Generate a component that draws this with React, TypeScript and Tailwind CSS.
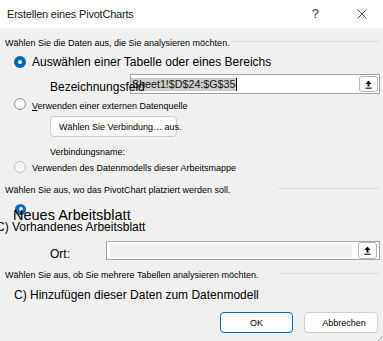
import React from "react";

const font = { fontFamily: '"Liberation Sans", Arial, sans-serif' };

export default function App() {
  return (
    <div
      className="w-[383px] h-[341px] bg-[#f0f0f0] overflow-hidden text-black relative"
      style={font}
    >
      {/* TITLE BAR */}
      <div className="h-[28px] bg-white flex items-center">
        <span className="ml-[7px] text-[11px] leading-[13px] tracking-[-0.2px] text-[#1a1a1a]">
          Erstellen eines PivotCharts
        </span>
        <span className="ml-auto mr-[38px] text-[13px] leading-[14px] text-[#333]">?</span>
        <CloseIcon />
      </div>

      {/* SECTION 1 */}
      <div className="flex items-start mt-[10px]">
        <span className="w-[231px] pl-[5px] text-[9px] leading-[11px] whitespace-nowrap">
          Wählen Sie die Daten aus, die Sie analysieren möchten.
        </span>
        <div className="mt-[3px] h-px w-[148px] bg-[#dcdcdc]" />
      </div>

      <div className="flex items-center h-[16px] mt-[5px]">
        <Radio checked className="ml-[14px]" />
        <span className="ml-[6px] text-[12px] leading-[16px] whitespace-nowrap">
          Auswählen einer Tabelle oder eines Bereichs
        </span>
      </div>

      <div className="flex items-start h-[20px] mt-[4px]">
        <span className="relative z-10 ml-[50px] w-[80px] mt-[5px] text-[12px] leading-[16px] whitespace-nowrap">
          Bezeichnungsfeld
        </span>
        <div className="w-[250px] h-[20px] bg-white border border-[#a3a3a3] flex items-center pr-px">
          <span className="bg-[#cccccc] h-[13px] px-px text-[10.7px] leading-[13px] whitespace-nowrap text-[#111]">
            Sheet1!$D$24:$G$35
          </span>
          <div className="w-px h-[13px] bg-black" />
          <UploadButton className="ml-auto h-[16px]" />
        </div>
      </div>

      <div className="flex items-start h-[16px] mt-[2px]">
        <Radio className="ml-[14px] mt-[2px]" />
        <span className="ml-[6px] mt-[5px] text-[9px] leading-[11px] whitespace-nowrap">
          <span className="underline">V</span>erwenden einer externen Datenquelle
        </span>
      </div>

      <button className="ml-[50px] mt-[4px] w-[127px] h-[21px] flex items-start pt-[5px] pl-[8px] bg-[#fdfdfd] border border-[#cccccc] rounded-[4px] text-[9px] leading-[11px] whitespace-nowrap">
        Wählen Sie Verbindung… aus.
      </button>

      <div className="ml-[50px] mt-[10px] text-[9px] leading-[11px]">Verbindungsname:</div>

      <div className="flex items-start h-[12px] mt-[3px]">
        <Radio disabled className="ml-[14px]" />
        <span className="ml-[6px] mt-[1.5px] text-[9px] leading-[11px] whitespace-nowrap">
          Verwenden des Datenmodells dieser Arbeitsmappe
        </span>
      </div>

      {/* SECTION 2 */}
      <div className="flex items-start mt-[12px]">
        <span className="w-[278px] pl-[5px] text-[9px] leading-[11px] whitespace-nowrap">
          Wählen Sie aus, wo das PivotChart platziert werden soll.
        </span>
        <div className="mt-[3px] h-px w-[101px] bg-[#dcdcdc]" />
      </div>

      <div className="relative mt-[6.5px] h-[17px]">
        <Radio checked className="absolute left-[15px] top-[1px] !w-[11px] !h-[11px]" />
        <span className="relative z-10 ml-[13px] text-[14.5px] leading-[17px] whitespace-nowrap">
          Neues Arbeitsblatt
        </span>
      </div>

      <div className="-ml-[4px] text-[12px] leading-[14px] whitespace-nowrap">
        C) Vorhandenes Arbeitsblatt
      </div>

      <div className="flex items-start h-[19px] mt-[7px]">
        <span className="ml-[50px] w-[56px] mt-[6.5px] text-[12px] leading-[14px]">Ort:</span>
        <div className="w-[274px] h-[19px] bg-white border border-[#a3a3a3] flex items-center pl-[3px] pr-[2px]">
          <div className="w-[242px] h-[13px] bg-[#f0f0f0]" />
          <UploadButton className="ml-auto h-[17px]" />
        </div>
      </div>

      {/* SECTION 3 */}
      <div className="flex items-start mt-[10.7px]">
        <span className="w-[280px] pl-[5px] text-[9px] leading-[11px] whitespace-nowrap">
          Wählen Sie aus, ob Sie mehrere Tabellen analysieren möchten.
        </span>
        <div className="mt-[3px] h-px w-[99px] bg-[#dcdcdc]" />
      </div>

      <div className="ml-[14px] mt-[7px] text-[12px] leading-[14px] whitespace-nowrap">
        C) Hinzufügen dieser Daten zum Datenmodell
      </div>

      {/* FOOTER BUTTONS */}
      <div className="flex justify-end gap-[11px] pr-[5px] mt-[9.5px]">
        <button className="w-[73px] h-[21px] flex items-center justify-center pt-[2px] bg-[#fdfdfd] border border-[#0067c0] rounded-[4px] text-[9px] leading-[11px]">
          OK
        </button>
        <button className="w-[74px] h-[21px] flex items-center justify-center pt-[2px] pl-[6px] bg-[#fdfdfd] border border-[#cfcfcf] rounded-[4px] text-[9px] leading-[11px]">
          Abbrechen
        </button>
      </div>

      <ResizeGrip />
    </div>
  );
}

/* HELPER COMPONENTS */

function Radio({ checked, disabled, className = "" }: { checked?: boolean; disabled?: boolean; className?: string }) {
  if (checked) {
    return (
      <div className={`w-[12px] h-[12px] shrink-0 rounded-full bg-[#0067c0] flex items-center justify-center ${className}`}>
        <div className="w-[4px] h-[4px] rounded-full bg-white" />
      </div>
    );
  }
  return (
    <div
      className={`w-[12px] h-[12px] shrink-0 rounded-full border ${
        disabled ? "border-[#c4c4c4] bg-[#f7f7f7]" : "border-[#8a8a8a] bg-[#f7f7f7]"
      } ${className}`}
    />
  );
}

function UploadButton({ className = "" }: { className?: string }) {
  return (
    <div className={`w-[19px] bg-white border border-[#b5b5b5] rounded-[3px] flex items-center justify-center ${className}`}>
      <svg viewBox="0 0 8 10" className="w-[7px] h-[9px]" fill="#000">
        <path d="M4 0.5 L0.5 4.3 H2.8 V7.2 H5.2 V4.3 H7.5 Z" />
        <rect x="0.5" y="8.6" width="7" height="1.2" />
      </svg>
    </div>
  );
}

const CloseIcon = () => (
  <svg viewBox="0 0 10 10" className="w-[10px] h-[10px] mr-[16px]" stroke="#333" strokeWidth="0.9" fill="none">
    <path d="M0.5 0.5 L9.5 9.5 M9.5 0.5 L0.5 9.5" />
  </svg>
);

const ResizeGrip = () => (
  <svg viewBox="0 0 6 6" className="absolute right-0 bottom-0 w-[6px] h-[6px]" stroke="#9a9a9a" strokeWidth="0.8">
    <path d="M6 1 L1 6 M6 4 L4 6" />
  </svg>
);
